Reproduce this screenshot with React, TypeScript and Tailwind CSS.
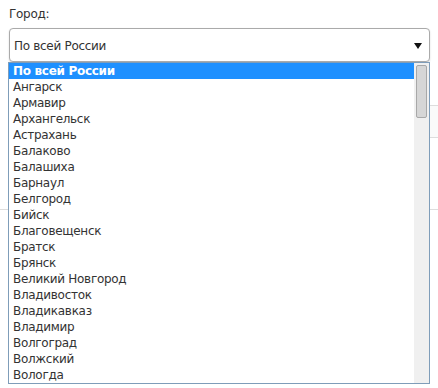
import React from 'react';

const cities = [
  'По всей России',
  'Ангарск',
  'Армавир',
  'Архангельск',
  'Астрахань',
  'Балаково',
  'Балашиха',
  'Барнаул',
  'Белгород',
  'Бийск',
  'Благовещенск',
  'Братск',
  'Брянск',
  'Великий Новгород',
  'Владивосток',
  'Владикавказ',
  'Владимир',
  'Волгоград',
  'Волжский',
  'Вологда'
];

const App: React.FC = () => {
  const selected = 0;

  return (
    <div className="relative h-[388px] w-[438px] overflow-hidden bg-white font-['DejaVu_Sans',sans-serif] text-[12px] tracking-[-0.3px] text-[#333]">
      <div className="px-[9px] pt-[7px]">
        <label className="block leading-[15px]">Город:</label>
        <div className="mt-[6px] flex h-[34px] w-[421px] items-center justify-between rounded-[4px] border border-[#aaa] bg-white pl-[4px] pr-[7px] pt-[1px] shadow-[0_1px_2px_rgba(0,0,0,0.15)]">
          <span>По всей России</span>
          <svg width="8" height="6" viewBox="0 0 8 6">
            <path d="M0 0H8L4 6Z" fill="#111" />
          </svg>
        </div>

        {/* page content under the open list */}
        <div className="mt-[43px] flex justify-end">
          <button className="-mr-[40px] h-[33px] w-[50px] rounded-[4px] border border-[#ddd] bg-[#fafafa]" />
        </div>
        <div className="-mx-[9px] mt-[71px] border-t border-[#ddd]" />
      </div>

      {/* open dropdown list */}
      <div className="absolute left-[8px] top-[62px] flex h-[322px] w-[422px] border border-[#7f9db9] bg-white">
        <ul className="flex-1">
          {cities.map((city, index) => (
            <li
              key={city}
              className={
                index === selected
                  ? 'h-[16px] bg-[#1e90ff] pl-[4px] leading-[16px] font-bold text-white'
                  : 'h-[16px] pl-[4px] leading-[16px]'
              }
            >
              {city}
            </li>
          ))}
        </ul>
        <div className="w-[15px] bg-[#f0f0f0] pt-[2px] pl-[2px]">
          <div className="h-[53px] w-[11px] rounded-[2px] border border-[#a8a8a8] bg-[#d6d6d6]" />
        </div>
      </div>
    </div>
  );
};

export default App;
